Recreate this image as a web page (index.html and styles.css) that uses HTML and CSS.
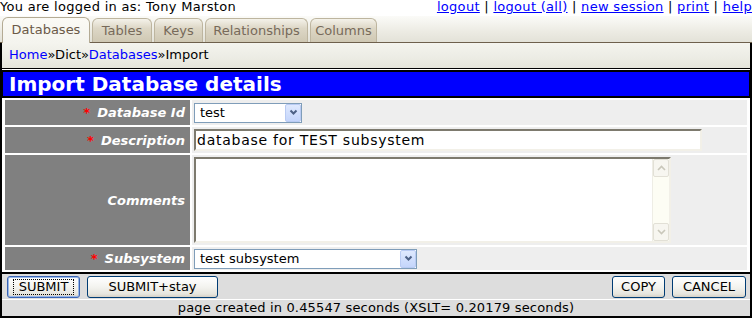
FILE: index.html
```html
<!DOCTYPE html>
<html>
<head>
    <title>Import Database details</title>
    <meta charset="utf-8">
    <link rel="stylesheet" href="styles.css">
</head>
<body>
    <div class="topbar">
        <span class="user">You are logged in as: Tony Marston</span>
        <span class="links"><a href="#">logout</a> | <a href="#">logout (all)</a> | <a href="#">new session</a> | <a href="#">print</a> | <a href="#">help</a></span>
    </div>

    <ul class="tabs">
        <li class="tab tab-databases active">Databases</li>
        <li class="tab tab-tables">Tables</li>
        <li class="tab tab-keys">Keys</li>
        <li class="tab tab-rel">Relationships</li>
        <li class="tab tab-cols">Columns</li>
    </ul>

    <div class="frame">
        <div class="crumbs"><a href="#">Home</a>»Dict»<a href="#">Databases</a>»Import</div>

        <h1 class="title">Import Database details</h1>

        <div class="details-wrap">
            <table class="details">
                <tr class="row-short">
                    <td class="label"><span class="req">*</span>Database Id</td>
                    <td class="value">
                        <div class="select select-id"><span class="select-text">test</span><span class="select-arrow"><svg width="9" height="7" viewBox="0 0 9 7"><path d="M1.5 1.5 L4.5 4.5 L7.5 1.5" fill="none" stroke="#4d6185" stroke-width="2"/></svg></span></div>
                    </td>
                </tr>
                <tr class="row-desc">
                    <td class="label"><span class="req">*</span>Description</td>
                    <td class="value">
                        <div class="textbox">database for TEST subsystem</div>
                    </td>
                </tr>
                <tr class="row-memo">
                    <td class="label">Comments</td>
                    <td class="value">
                        <div class="memo">
                            <div class="memo-text"></div>
                            <div class="vscroll">
                                <span class="sbtn"><svg width="9" height="6" viewBox="0 0 9 6"><path d="M1 5 L4.5 1.5 L8 5" fill="none" stroke="#c9c7ba" stroke-width="1.6"/></svg></span>
                                <span class="sbtn"><svg width="9" height="6" viewBox="0 0 9 6"><path d="M1 1 L4.5 4.5 L8 1" fill="none" stroke="#c9c7ba" stroke-width="1.6"/></svg></span>
                            </div>
                        </div>
                    </td>
                </tr>
                <tr class="row-sub">
                    <td class="label"><span class="req">*</span>Subsystem</td>
                    <td class="value">
                        <div class="select select-sub"><span class="select-text">test subsystem</span><span class="select-arrow"><svg width="9" height="7" viewBox="0 0 9 7"><path d="M1.5 1.5 L4.5 4.5 L7.5 1.5" fill="none" stroke="#4d6185" stroke-width="2"/></svg></span></div>
                    </td>
                </tr>
            </table>
        </div>

        <div class="actions">
            <div class="btn-group">
                <button class="btn btn-focus btn-submit"><span>SUBMIT</span></button>
                <button class="btn btn-stay">SUBMIT+stay</button>
            </div>
            <div class="btn-group">
                <button class="btn btn-copy">COPY</button>
                <button class="btn btn-cancel">CANCEL</button>
            </div>
        </div>

        <div class="footer">page created in 0.45547 seconds (XSLT= 0.20179 seconds)</div>
    </div>
</body>
</html>
```

FILE: styles.css
```css
body {
    margin: 0;
    font-family: "DejaVu Sans", Verdana, sans-serif;
    font-size: 13px;
    color: #000;
    background: #fff;
}

a {
    color: #0000ff;
}

/* top line */
.topbar {
    display: flex;
    justify-content: space-between;
    height: 16px;
    line-height: 14px;
    letter-spacing: 0.3px;
    white-space: nowrap;
}

.links a {
    text-decoration: underline;
}

/* tab strip */
.tabs {
    display: flex;
    gap: 2px;
    margin: 0;
    padding: 0 0 0 2px;
    list-style: none;
    height: 26px;
    border-bottom: 1px solid #6e604c;
    background: linear-gradient(#fbfbf8, #ecebe3 60%, #e3e2d8);
}

.tab {
    box-sizing: border-box;
    margin-top: 2px;
    height: 24px;
    line-height: 23px;
    text-align: center;
    color: #776a5a;
    border: 1px solid #bdb59f;
    border-bottom: none;
    border-radius: 6px 6px 0 0;
    background: linear-gradient(#f4f2ea, #ddd7c6 40%, #cfc8b3);
}

.tab-databases { width: 88px; }
.tab-tables { width: 60px; }
.tab-keys { width: 49px; }
.tab-rel { width: 103px; }
.tab-cols { width: 67px; }

.tab.active {
    margin-top: 1px;
    height: 26px;
    margin-bottom: -1px;
    color: #6b5a48;
    border-color: #b4ab94;
    background: linear-gradient(#fbfaf5, #f4f4ee);
}

/* framed content */
.frame {
    border: 2px solid #000;
    border-top: none;
}

.crumbs {
    height: 25px;
    line-height: 24px;
    padding-left: 7px;
    border-bottom: 1px solid #000;
    background: linear-gradient(#f4f4ee, #ecece4 60%, #e4e4da);
}

.crumbs a {
    text-decoration: none;
}

.title {
    margin: 1px 0 0 0;
    height: 24px;
    line-height: 24px;
    padding-left: 6px;
    font-size: 20px;
    font-weight: bold;
    color: #fff;
    background: #0000ff;
    border: 2px solid #000;
    border-left-width: 1px;
    border-right-width: 1px;
}

.details-wrap {
    padding: 0 1px;
}

.details {
    width: 100%;
    border-spacing: 2px;
}

.details td {
    padding: 0;
}

.row-short td { height: 25px; }
.row-desc td { height: 26px; }
.row-memo td { height: 90px; }
.row-sub td { height: 23px; }

.label {
    width: 185px;
    padding-right: 5px !important;
    box-sizing: border-box;
    text-align: right;
    background: #808080;
    color: #fff;
    font-weight: bold;
    font-style: italic;
}

.req {
    margin-right: 7px;
    color: #ff0000;
    font-style: normal;
}

.value {
    background: #eeeeee;
    padding-left: 2px !important;
}

/* fake select boxes */
.select {
    display: flex;
    align-items: center;
    box-sizing: border-box;
    height: 20px;
    border: 1px solid #7f9db9;
    background: #fff;
}

.select-id {
    width: 108px;
}

.select-sub {
    width: 223px;
}

.select-text {
    flex: 1;
    padding-left: 5px;
}

.select-arrow {
    display: flex;
    align-items: center;
    justify-content: center;
    box-sizing: border-box;
    width: 16px;
    height: 18px;
    border: 1px solid #b9cbf3;
    border-radius: 2px;
    background: linear-gradient(#dfe9fe, #c4d5fb);
}

.textbox {
    box-sizing: border-box;
    width: 508px;
    height: 22px;
    line-height: 18px;
    padding-left: 1px;
    font-size: 14px;
    letter-spacing: 0.75px;
    background: #fff;
    border: 2px solid;
    border-color: #7d7a6e #f2f0e8 #f2f0e8 #7d7a6e;
}

.memo {
    display: flex;
    box-sizing: border-box;
    width: 477px;
    height: 86px;
    background: #fff;
    border: 2px solid;
    border-color: #7d7a6e #f2f0e8 #f2f0e8 #7d7a6e;
}

.memo-text {
    flex: 1;
}

.vscroll {
    display: flex;
    flex-direction: column;
    justify-content: space-between;
    width: 16px;
    background: #fdfdf4;
    border-left: 1px solid #eeede5;
}

.sbtn {
    display: flex;
    align-items: center;
    justify-content: center;
    height: 16px;
    border: 1px solid #e2e0d6;
    border-radius: 2px;
    background: #f7f6f0;
}

/* button bar */
.actions {
    display: flex;
    justify-content: space-between;
    align-items: center;
    height: 25px;
    padding: 0 4px 0 5px;
    border-top: 2px solid #000;
    background: #dddddd;
}

.btn-group {
    display: flex;
    gap: 7px;
}

.btn {
    height: 22px;
    padding: 0;
    font-family: "DejaVu Sans", Verdana, sans-serif;
    font-size: 13px;
    color: #000;
    border: 1px solid #003c74;
    border-radius: 3px;
    background: linear-gradient(#ffffff, #f3f3ef 50%, #e6e5de 85%, #d6d0c5);
}

.btn-submit {
    width: 73px;
    border-color: #3a64b4;
    box-shadow: inset 0 0 0 1px #98b8ea;
}

.btn-submit span {
    display: inline-block;
    padding: 0 5px;
    line-height: 14px;
    outline: 1px dotted #000;
}

.btn-stay {
    width: 131px;
}

.btn-copy {
    width: 53px;
}

.btn-cancel {
    width: 74px;
}

.footer {
    height: 16px;
    line-height: 16px;
    text-align: center;
    letter-spacing: 0.15px;
    border-top: 1px solid #fff;
    background: #dddddd;
}
```
